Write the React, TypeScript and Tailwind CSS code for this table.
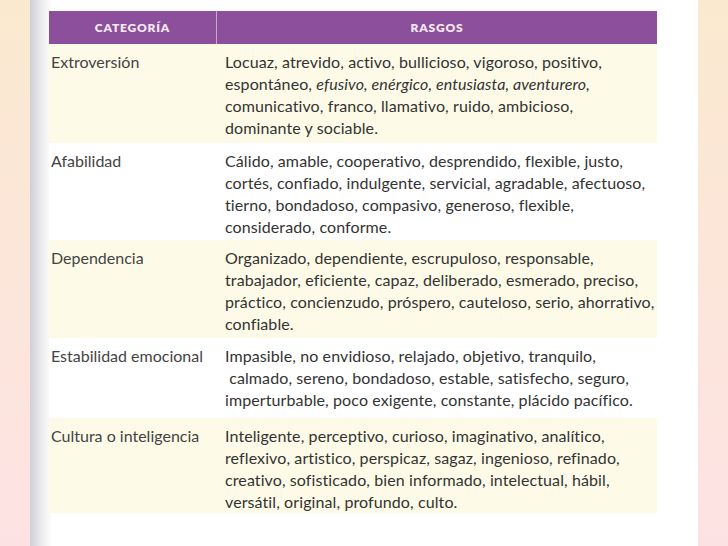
import React from "react";

const rows = [
  {
    category: "Extroversión",
    bg: "bg-[#fdfbe8]",
    height: "h-[99px]",
    lines: [
      "Locuaz, atrevido, activo, bullicioso, vigoroso, positivo,",
      "espontáneo, <i>efusivo, enérgico, entusiasta, aventurero,</i>",
      "comunicativo, franco, llamativo, ruido, ambicioso,",
      "dominante y sociable.",
    ],
  },
  {
    category: "Afabilidad",
    bg: "bg-white",
    height: "h-[97px]",
    lines: [
      "Cálido, amable, cooperativo, desprendido, flexible, justo,",
      "cortés, confiado, indulgente, servicial, agradable, afectuoso,",
      "tierno, bondadoso, compasivo, generoso, flexible,",
      "considerado, conforme.",
    ],
  },
  {
    category: "Dependencia",
    bg: "bg-[#fdfbe8]",
    height: "h-[98px]",
    lines: [
      "Organizado, dependiente, escrupuloso, responsable,",
      "trabajador, eficiente, capaz, deliberado, esmerado, preciso,",
      "práctico, concienzudo, próspero, cauteloso, serio, ahorrativo,",
      "confiable.",
    ],
  },
  {
    category: "Estabilidad emocional",
    bg: "bg-white",
    height: "h-[80px]",
    lines: [
      "Impasible, no envidioso, relajado, objetivo, tranquilo,",
      "\u00a0calmado, sereno, bondadoso, estable, satisfecho, seguro,",
      "imperturbable, poco exigente, constante, plácido pacífico.",
    ],
  },
  {
    category: "Cultura o inteligencia",
    bg: "bg-[#fdfbe8]",
    height: "h-[95px]",
    lines: [
      "Inteligente, perceptivo, curioso, imaginativo, analítico,",
      "reflexivo, artistico, perspicaz, sagaz, ingenioso, refinado,",
      "creativo, sofisticado, bien informado, intelectual, hábil,",
      "versátil, original, profundo, culto.",
    ],
  },
];

function Line({ text }: { text: string }) {
  // handle the one italic run in the scan
  const m = text.match(/^(.*)<i>(.*)<\/i>(.*)$/);
  if (!m) return <div className="whitespace-nowrap">{text}</div>;
  return (
    <div className="whitespace-nowrap">
      {m[1]}
      <span className="italic">{m[2]}</span>
      {m[3]}
    </div>
  );
}

export default function App() {
  return (
    <div className="flex w-[728px] h-[546px] overflow-hidden font-['Lato',sans-serif] [font-variant-ligatures:none]">
      <div className="w-[30px] shrink-0 bg-gradient-to-b from-[#fbe9cf] via-[#fce6da] to-[#fde2e3]" />

      <div className="flex-1 bg-[linear-gradient(to_right,#cfcfd4,#e6e6ea_9px,#ffffff_22px)] pl-[19px] pt-[11px]">
        <div className="w-[608px]">
          <div className="flex h-[33px] bg-[#8b4f9b] text-[12px] font-extrabold tracking-[0.8px] text-[#f4e8f1]">
            <div className="w-[168px] flex items-center justify-center border-r border-[#c9a7d1]">
              CATEGORÍA
            </div>
            <div className="flex-1 flex items-center justify-center">RASGOS</div>
          </div>

          {rows.map((row, i) => (
            <div key={i} className={`flex ${row.bg} ${row.height} pt-[7px] text-[16px] leading-[22px]`}>
              <div className="w-[168px] shrink-0 pl-[2px] text-[#444] whitespace-nowrap">{row.category}</div>
              <div className="flex-1 pl-[8px] text-[#333] tracking-[0.1px]">
                {row.lines.map((l, j) => (
                  <Line key={j} text={l} />
                ))}
              </div>
            </div>
          ))}
        </div>
      </div>

      <div className="w-[30px] shrink-0 bg-gradient-to-b from-[#fbe9cf] via-[#fce6da] to-[#fde2e3]" />
    </div>
  );
}
